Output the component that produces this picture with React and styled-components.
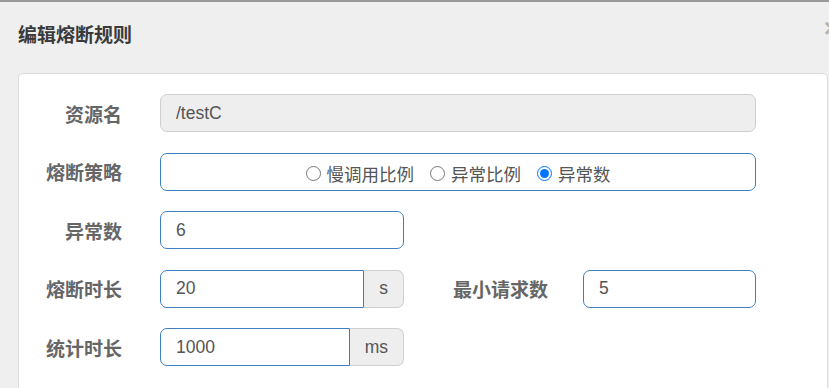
import React from "react";
import styled, { createGlobalStyle } from "styled-components";

const Global = createGlobalStyle`
  html, body { margin: 0; padding: 0; }
  body {
    background: #efefef;
    font-family: "Liberation Sans", "Noto Sans CJK SC", Arial, sans-serif;
  }
`;

const Page = styled.div`
  width: 829px;
  height: 388px;
  box-sizing: border-box;
  border-top: 2px solid #9a9a9a;
  background: #efefef;
  overflow: hidden;
`;

const Header = styled.div`
  height: 71px;
  box-sizing: border-box;
  display: flex;
  justify-content: space-between;
  align-items: flex-start;
  padding: 22px 0 0 18px;
`;

const Title = styled.h4`
  margin: 0;
  font-family: "Noto Sans CJK SC", sans-serif;
  font-size: 19px;
  line-height: 1;
  font-weight: 700;
  color: #3a3a3a;
`;

const Close = styled.span`
  margin: -9px -10px 0 0;
  font-family: "Liberation Sans", sans-serif;
  font-size: 26px;
  line-height: 1;
  font-weight: 700;
  color: #b5b5b5;
`;

const Panel = styled.div`
  margin: 0 1px 0 18px;
  background: #fff;
  border: 1px solid #dcdcdc;
  border-radius: 5px;
  padding: 20px 0 30px;
  display: flex;
  flex-direction: column;
  gap: 20.5px;
`;

const Row = styled.div`
  display: flex;
  align-items: center;
  height: 38px;
`;

const Label = styled.label`
  width: ${(p) => p.$w || 103}px;
  margin-right: ${(p) => p.$mr || 38}px;
  flex: none;
  text-align: right;
  font-family: "Noto Sans CJK SC", sans-serif;
  font-weight: 700;
  font-size: 19px;
  color: #666;
`;

const Input = styled.input`
  box-sizing: border-box;
  width: ${(p) => (p.$w ? `${p.$w}px` : "auto")};
  flex: ${(p) => (p.$grow ? "1 1 0" : "none")};
  min-width: 0;
  height: 38px;
  margin: 0;
  padding: 0 15px;
  border: 1px solid ${(p) => (p.$disabled ? "#cfcfcf" : "#3e7fc1")};
  background: ${(p) => (p.$disabled ? "#eeeeee" : "#fff")};
  border-radius: ${(p) => (p.$joined ? "7px 0 0 7px" : "7px")};
  font-family: "Liberation Sans", Arial, sans-serif;
  font-size: 17.5px;
  color: #555;
  outline: none;
`;

const Group = styled.div`
  display: flex;
  width: 244px;
  height: 38px;
`;

const Addon = styled.span`
  box-sizing: border-box;
  flex: none;
  display: flex;
  align-items: center;
  justify-content: center;
  padding: 0 15px;
  min-width: 40px;
  border: 1px solid #d0d0d0;
  border-left: 0;
  border-radius: 0 7px 7px 0;
  background: #eeeeee;
  font-family: "Liberation Sans", Arial, sans-serif;
  font-size: 17.5px;
  color: #555;
`;

const RadioBox = styled.div`
  box-sizing: border-box;
  width: 596px;
  height: 38px;
  border: 1px solid #3e7fc1;
  border-radius: 7px;
  display: flex;
  align-items: center;
  justify-content: center;
  gap: 16px;
  padding-top: 4px;
`;

const RadioItem = styled.label`
  display: flex;
  align-items: center;
  gap: 6px;
  font-family: "Noto Sans CJK SC", sans-serif;
  font-size: 17.5px;
  color: #555;
`;

const Radio = styled.input`
  margin: 0;
  width: 15px;
  height: 15px;
`;

export default function App() {
  return (
    <>
      <Global />
      <Page>
        <Header>
          <Title>编辑熔断规则</Title>
          <Close>×</Close>
        </Header>
        <Panel>
          <Row>
            <Label>资源名</Label>
            <Input $w={596} $disabled readOnly defaultValue="/testC" />
          </Row>
          <Row>
            <Label>熔断策略</Label>
            <RadioBox>
              <RadioItem>
                <Radio type="radio" name="strategy" readOnly />
                慢调用比例
              </RadioItem>
              <RadioItem>
                <Radio type="radio" name="strategy" readOnly />
                异常比例
              </RadioItem>
              <RadioItem>
                <Radio type="radio" name="strategy" defaultChecked />
                异常数
              </RadioItem>
            </RadioBox>
          </Row>
          <Row>
            <Label>异常数</Label>
            <Input $w={244} readOnly defaultValue="6" />
          </Row>
          <Row>
            <Label>熔断时长</Label>
            <Group>
              <Input $grow $joined readOnly defaultValue="20" />
              <Addon>s</Addon>
            </Group>
            <Label $w={144} $mr={35}>最小请求数</Label>
            <Input $w={173} readOnly defaultValue="5" />
          </Row>
          <Row>
            <Label>统计时长</Label>
            <Group>
              <Input $grow $joined readOnly defaultValue="1000" />
              <Addon>ms</Addon>
            </Group>
          </Row>
        </Panel>
      </Page>
    </>
  );
}
